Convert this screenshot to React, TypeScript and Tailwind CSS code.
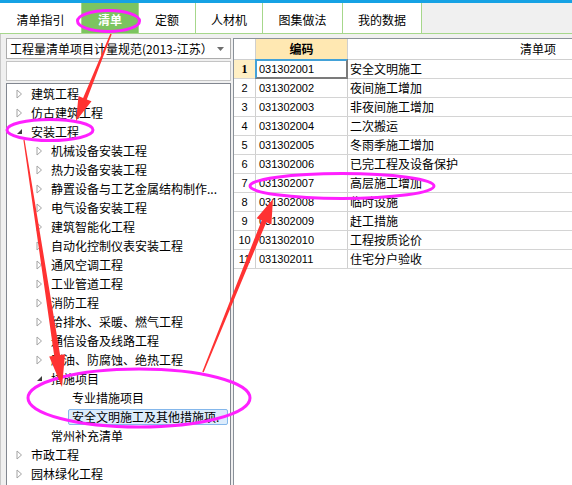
import React from "react";

const tabs = [
  { label: "清单指引", cls: "w-[82px]" },
  { label: "清单", cls: "w-[57px]", active: true },
  { label: "定额", cls: "w-[57px]" },
  { label: "人材机", cls: "w-[67px]" },
  { label: "图集做法", cls: "w-[80px]" },
  { label: "我的数据", cls: "w-[79px]" },
];

type Node = { text: string; level: 0 | 1 | 2; icon: "closed" | "open" | "none"; selected?: boolean };

const tree: Node[] = [
  { text: "建筑工程", level: 0, icon: "closed" },
  { text: "仿古建筑工程", level: 0, icon: "closed" },
  { text: "安装工程", level: 0, icon: "open" },
  { text: "机械设备安装工程", level: 1, icon: "closed" },
  { text: "热力设备安装工程", level: 1, icon: "closed" },
  { text: "静置设备与工艺金属结构制作...", level: 1, icon: "closed" },
  { text: "电气设备安装工程", level: 1, icon: "closed" },
  { text: "建筑智能化工程", level: 1, icon: "closed" },
  { text: "自动化控制仪表安装工程", level: 1, icon: "closed" },
  { text: "通风空调工程", level: 1, icon: "closed" },
  { text: "工业管道工程", level: 1, icon: "closed" },
  { text: "消防工程", level: 1, icon: "closed" },
  { text: "给排水、采暖、燃气工程", level: 1, icon: "closed" },
  { text: "通信设备及线路工程", level: 1, icon: "closed" },
  { text: "刷油、防腐蚀、绝热工程", level: 1, icon: "closed" },
  { text: "措施项目", level: 1, icon: "open" },
  { text: "专业措施项目", level: 2, icon: "none" },
  { text: "安全文明施工及其他措施项.", level: 2, icon: "none", selected: true },
  { text: "常州补充清单", level: 1, icon: "none" },
  { text: "市政工程", level: 0, icon: "closed" },
  { text: "园林绿化工程", level: 0, icon: "closed" },
];

const levelPad = ["pl-[9px]", "pl-[29px]", "pl-[50px]"];

const rows = [
  "安全文明施工",
  "夜间施工增加",
  "非夜间施工增加",
  "二次搬运",
  "冬雨季施工增加",
  "已完工程及设备保护",
  "高层施工增加",
  "临时设施",
  "赶工措施",
  "工程按质论价",
  "住宅分户验收",
];

function arrowPoints(x1: number, y1: number, x2: number, y2: number, w0: number, w1: number, hl: number, hw: number) {
  const dx = x2 - x1, dy = y2 - y1;
  const L = Math.hypot(dx, dy);
  const ux = dx / L, uy = dy / L;
  const nx = -uy, ny = ux;
  const bx = x2 - ux * hl, by = y2 - uy * hl;
  const pts = [
    [x1 + (nx * w0) / 2, y1 + (ny * w0) / 2],
    [bx + (nx * w1) / 2, by + (ny * w1) / 2],
    [bx + nx * hw, by + ny * hw],
    [x2, y2],
    [bx - nx * hw, by - ny * hw],
    [bx - (nx * w1) / 2, by - (ny * w1) / 2],
    [x1 - (nx * w0) / 2, y1 - (ny * w0) / 2],
  ];
  return pts.map((p) => p.map((v) => v.toFixed(1)).join(",")).join(" ");
}

function Closed() {
  return (
    <svg width="7" height="10" viewBox="0 0 7 10" className="block">
      <path d="M1 1 L5.5 5 L1 9 Z" fill="white" stroke="#a3a3a3" strokeWidth="1" />
    </svg>
  );
}

function Open() {
  return (
    <svg width="7" height="10" viewBox="0 0 7 10" className="block">
      <path d="M6 2 L6 7 L1 7 Z" fill="#3c3c3c" />
    </svg>
  );
}

export default function App() {
  return (
    <div className="relative w-[572px] h-[485px] overflow-hidden bg-[#f0f0f0] text-black font-['Noto_Sans_CJK_SC',sans-serif] text-[12px] leading-none">
      <div className="h-[3px] bg-[#16a2e4]" />
      <div className="h-[31px] flex border-b border-[#a6d78b] bg-[#f0f0f0]">
        {tabs.map((t) => (
          <div
            key={t.label}
            className={`${t.cls} h-[30px] flex items-center justify-center pt-[3px] border-r border-[#a6d78b] ${
              t.active ? "bg-[#7cc460] text-white font-bold" : "bg-white"
            }`}
          >
            {t.label}
          </div>
        ))}
      </div>
      <div className="flex h-[451px] border-l border-[#c8c8c8]">
        <div className="w-[225px] ml-[5px] pt-[4px] flex flex-col">
          <div className="h-[21px] border border-[#acacac] bg-white flex items-center pl-[3px] pr-[6px]">
            <span className="flex-1 whitespace-nowrap">工程量清单项目计量规范(2013-江苏）</span>
            <svg width="7" height="4" viewBox="0 0 7 4" className="block">
              <path d="M0 0 L7 0 L3.5 4 Z" fill="#6d6d6d" />
            </svg>
          </div>
          <div className="h-[20px] mt-[2px] border border-[#c4c4c4] bg-white" />
          <div className="flex-1 mt-[2px] border-l border-t border-r border-[#828790] bg-white overflow-hidden">
            {tree.map((n, i) => (
              <div key={i} className={`h-[19px] flex items-center whitespace-nowrap ${levelPad[n.level]}`}>
                {n.selected ? (
                  <>
                    <div className="w-[11px] shrink-0" />
                    <div className="w-[160px] shrink-0 h-[16px] flex items-center px-[3px] border border-[#84b7eb] bg-[#dcecfc] rounded-[2px]">
                      {n.text}
                    </div>
                  </>
                ) : (
                  <>
                    <div className="w-[15px] shrink-0 flex items-center">
                      {n.icon === "closed" && <Closed />}
                      {n.icon === "open" && <Open />}
                    </div>
                    <span>{n.text}</span>
                  </>
                )}
              </div>
            ))}
          </div>
        </div>
        <div className="flex-1 ml-[2px] mt-[4px] border-t border-l border-[#8a9199] bg-white overflow-hidden">
          <div className="flex h-[21px] border-b border-[#cfcfcf] w-[494px]">
            <div className="w-[22px] shrink-0 border-r border-[#cfcfcf] bg-white" />
            <div className="w-[92px] shrink-0 border-r border-[#cfcfcf] bg-[#ffe8b2] flex items-center justify-center font-bold">
              编码
            </div>
            <div className="w-[380px] shrink-0 flex items-center justify-center">清单项</div>
          </div>
          {rows.map((name, i) => (
            <div key={i} className="flex h-[19px] border-b border-[#d4d4d4] w-[494px]">
              <div
                className={`w-[22px] shrink-0 border-r border-[#cfcfcf] flex items-center justify-center text-[11px] ${
                  i === 0
                    ? "bg-[#ffefc4] font-bold font-['Liberation_Serif',serif] text-[12px]"
                    : "bg-white font-['Liberation_Sans',sans-serif]"
                }`}
              >
                {i + 1}
              </div>
              <div className="relative w-[92px] shrink-0 border-r border-[#cfcfcf] flex items-center pl-[3px] font-['Liberation_Sans',sans-serif] text-[11px]">
                {`0313020${String(i + 1).padStart(2, "0")}`}
                {i === 0 && (
                  <div className="absolute -top-[1px] -left-[1px] -right-[1px] -bottom-[1px] border-t-2 border-l-2 border-r-2 border-b-2 border-t-[#43a2d8] border-l-[#43a2d8] border-r-[#7b7b7b] border-b-[#7b7b7b]" />
                )}
              </div>
              <div className="w-[380px] shrink-0 flex items-center pl-[2px]">{name}</div>
            </div>
          ))}
        </div>
      </div>

      <svg className="absolute inset-0 pointer-events-none" width="572" height="485" viewBox="0 0 572 485">
        <g fill="none" stroke="#ff20ff" strokeWidth="3">
          <ellipse cx="108.5" cy="21" rx="31" ry="10.5" />
          <ellipse cx="50" cy="130" rx="43" ry="10.5" />
          <ellipse cx="139" cy="398" rx="111" ry="29" />
          <ellipse cx="342" cy="186" rx="92" ry="12.5" />
        </g>
        <g fill="#ff3232">
          <polygon points={arrowPoints(111, 34, 76, 121, 1.5, 4, 24, 7)} />
          <polygon points={arrowPoints(24, 140, 62, 387, 1.2, 6, 32, 8)} />
          <polygon points={arrowPoints(203, 372, 273, 199, 1.5, 5, 24, 8)} />
        </g>
      </svg>
    </div>
  );
}
